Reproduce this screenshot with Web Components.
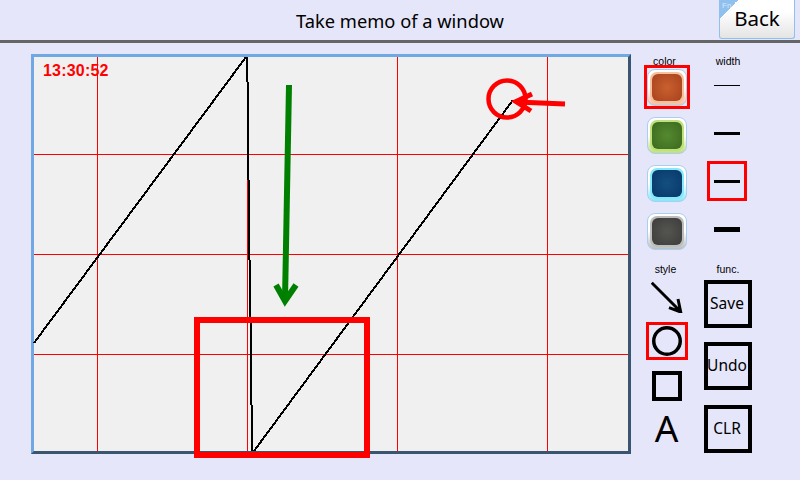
<!DOCTYPE html>
<html>
<head>
<meta charset="utf-8">
<title>Take memo of a window</title>
<style>
  html, body { margin: 0; padding: 0; }
  body {
    width: 800px;
    height: 480px;
    overflow: hidden;
    background: #e6e6fa;
    font-family: "Noto Sans", sans-serif;
  }
  .main { display: flex; align-items: flex-start; padding: 11px 0 0 31px; }
</style>
</head>
<body>
<memo-header title-text="Take memo of a window"></memo-header>
<div class="main">
  <memo-canvas time="13:30:52"></memo-canvas>
  <tool-panel>
    <tool-column slot="colors" label="color">
      <color-swatch color="orange" selected></color-swatch>
      <color-swatch color="green"></color-swatch>
      <color-swatch color="blue"></color-swatch>
      <color-swatch color="gray"></color-swatch>
    </tool-column>
    <tool-column slot="widths" label="width">
      <width-option size="1"></width-option>
      <width-option size="3"></width-option>
      <width-option size="3" selected></width-option>
      <width-option size="5"></width-option>
    </tool-column>
    <tool-column slot="styles" label="style">
      <style-option kind="arrow"></style-option>
      <style-option kind="circle" selected></style-option>
      <style-option kind="square"></style-option>
      <style-option kind="text"></style-option>
    </tool-column>
    <tool-column slot="funcs" label="func.">
      <func-button>Save</func-button>
      <func-button>Undo</func-button>
      <func-button>CLR</func-button>
    </tool-column>
  </tool-panel>
</div>

<script>
class MemoHeader extends HTMLElement {
  constructor() {
    super();
    const shadowRoot = this.attachShadow({mode: 'open'});
    shadowRoot.innerHTML = `
      <style>
        :host {
          display: flex;
          align-items: center;
          justify-content: center;
          position: relative;
          height: 40px;
          border-bottom: 3px solid #666;
          color: #000;
        }
        h1 {
          margin: 0;
          font: normal 18.3px "Noto Sans", sans-serif;
        }
        button {
          position: absolute;
          top: 0;
          right: 5px;
          width: 76px;
          height: 39px;
          padding: 0 0 2px 0;
          box-sizing: border-box;
          border: 1px solid #8fc0ee;
          border-top: 0;
          border-radius: 0 0 3px 3px;
          background: linear-gradient(#fff 30%, #e4e4e4);
          font: 20.5px "Noto Sans", sans-serif;
          color: #000;
          overflow: hidden;
        }
        .fn {
          position: absolute;
          left: 0;
          top: 0;
          width: 18px;
          height: 18px;
          background: linear-gradient(135deg, #8fc0ee 50%, transparent 50%);
        }
        .fn span {
          position: absolute;
          left: 2px;
          top: 1px;
          font: 8px "Liberation Sans", sans-serif;
          color: #d8e8fa;
        }
      </style>
      <h1>${this.getAttribute('title-text')}</h1>
      <button><div class="fn"><span>Fn</span></div>Back</button>
    `;
  }
}

class MemoCanvas extends HTMLElement {
  constructor() {
    super();
    const shadowRoot = this.attachShadow({mode: 'open'});
    shadowRoot.innerHTML = `
      <style>
        :host {
          display: block;
          position: relative;
          flex: none;
          width: 600px;
          height: 400px;
          box-sizing: border-box;
          background: #f0f0f0;
          border-style: solid;
          border-width: 3px;
          border-color: #70a8e4 #3a5570 #3a5570 #70a8e4;
        }
        svg {
          position: absolute;
          left: -3px;
          top: -3px;
          width: 600px;
          height: 400px;
          overflow: visible;
        }
        .time {
          position: absolute;
          left: 9px;
          top: 5px;
          font: bold 16px "Liberation Sans", sans-serif;
          letter-spacing: 0.2px;
          color: #f00;
        }
      </style>
      <svg viewBox="31 54 600 400" fill="none">
        <g stroke="#f00" stroke-width="1" shape-rendering="crispEdges">
          <path d="M34 154.5H628M34 254.5H628M34 354.5H628"/>
          <path d="M97.5 57V451M247.5 57V451M397.5 57V451M547.5 57V451"/>
        </g>
        <g stroke="#000" stroke-width="2" shape-rendering="crispEdges" stroke-linejoin="bevel">
          <path d="M34 343L246 57"/>
          <path d="M247 57V82M248 82V180M249 180V260M250 260V323M251 323V405M252 405V451"/>
          <path d="M254 451L513 100"/>
        </g>
        <g stroke="#008000" stroke-width="6">
          <path d="M289 85L285 300"/>
          <path d="M276 285L285 301L296 285"/>
        </g>
        <g stroke="#f00">
          <circle cx="507" cy="99" r="18.5" stroke-width="4.5"/>
          <path d="M565 104L517 102" stroke-width="5"/>
          <path d="M532 94L516 101.5L531 111" stroke-width="5"/>
          <rect x="197" y="320" width="170" height="135" stroke-width="6"/>
        </g>
      </svg>
      <div class="time">${this.getAttribute('time')}</div>
    `;
  }
}

class ToolPanel extends HTMLElement {
  constructor() {
    super();
    const shadowRoot = this.attachShadow({mode: 'open'});
    shadowRoot.innerHTML = `
      <style>
        :host {
          display: grid;
          flex: none;
          grid-template-columns: 46px 48px;
          column-gap: 14px;
          margin: -11px 0 0 13px;
          padding-top: 12px;
        }
      </style>
      <slot name="colors"></slot>
      <slot name="widths"></slot>
      <slot name="styles"></slot>
      <slot name="funcs"></slot>
    `;
  }
}

class ToolColumn extends HTMLElement {
  constructor() {
    super();
    const shadowRoot = this.attachShadow({mode: 'open'});
    shadowRoot.innerHTML = `
      <style>
        :host {
          display: flex;
          flex-direction: column;
          align-items: center;
        }
        :host([slot="styles"]), :host([slot="funcs"]) { padding-top: 6px; }
        :host([slot="funcs"]) { gap: 14.5px; }
        .label {
          height: 10px;
          font: 10.5px/12px "Liberation Sans", sans-serif;
          color: #000;
          white-space: nowrap;
        }
        :host([slot="colors"]) .label { padding-right: 5px; }
        :host([slot="styles"]) .label { padding-right: 3px; margin-bottom: -2px; }
        :host([slot="funcs"]) .label { margin-bottom: -8px; }
      </style>
      <div class="label">${this.getAttribute('label')}</div>
      <slot></slot>
    `;
  }
}

const swatches = {
  orange: ['#c8602f', '#a9421d', '#f7c09c'],
  green: ['#55892f', '#3a6a1e', '#bfe07a'],
  blue: ['#134f80', '#08386a', '#86e8f8'],
  gray: ['#555550', '#3c3c3c', '#bdbdbd'],
};

class ColorSwatch extends HTMLElement {
  constructor() {
    super();
    const [mid, edge, rim] = swatches[this.getAttribute('color')];
    const shadowRoot = this.attachShadow({mode: 'open'});
    shadowRoot.innerHTML = `
      <style>
        :host {
          display: flex;
          align-items: center;
          justify-content: center;
          width: 46px;
          height: 44px;
          margin-bottom: 4px;
          box-sizing: border-box;
        }
        :host([selected]) { border: 3px solid #f00; }
        .face {
          display: flex;
          align-items: center;
          justify-content: center;
          width: 40px;
          height: 37px;
          flex: none;
          box-sizing: border-box;
          border: 1px solid #a8cff2;
          border-radius: 8px;
          background: linear-gradient(#fff, #fff 50%, ${rim});
        }
        .well {
          width: 34px;
          height: 31px;
          box-sizing: border-box;
          padding: 2px;
          border-radius: 7px;
          background: ${rim};
        }
        .well div {
          width: 100%;
          height: 100%;
          border-radius: 6px;
          background: radial-gradient(circle, ${mid}, ${edge});
        }
      </style>
      <div class="face"><div class="well"><div></div></div></div>
    `;
  }
}

class WidthOption extends HTMLElement {
  constructor() {
    super();
    const size = Number(this.getAttribute('size'));
    const shadowRoot = this.attachShadow({mode: 'open'});
    shadowRoot.innerHTML = `
      <style>
        :host {
          display: flex;
          align-items: center;
          justify-content: center;
          width: 40px;
          height: 40px;
          margin: 0 2px 8px 0;
          box-sizing: border-box;
        }
        :host([selected]) { border: 3px solid #f00; }
        div { width: 26px; height: ${size}px; background: #000; }
      </style>
      <div></div>
    `;
  }
}

const styleIcons = {
  arrow: `<svg width="32" height="32" viewBox="0 0 32 32" fill="none" stroke="#000" stroke-width="3">
            <path d="M.7 1.7L29 30M18 26.7L29.7 31L27 18"/></svg>`,
  circle: `<svg width="32" height="32" viewBox="0 0 32 32" fill="none" stroke="#000" stroke-width="3.5">
            <circle cx="16" cy="16" r="13.25"/></svg>`,
  square: `<svg width="30" height="30" viewBox="0 0 30 30" fill="none" stroke="#000" stroke-width="4">
            <rect x="2" y="2" width="26" height="26"/></svg>`,
  text: `<span>A</span>`,
};

class StyleOption extends HTMLElement {
  constructor() {
    super();
    const shadowRoot = this.attachShadow({mode: 'open'});
    shadowRoot.innerHTML = `
      <style>
        :host {
          display: flex;
          align-items: center;
          justify-content: center;
          width: 42px;
          height: 38px;
          margin-top: 6.5px;
          box-sizing: border-box;
        }
        :host([selected]) { border: 3px solid #f00; }
        span { font: 37px/38px "Noto Sans", sans-serif; color: #000; margin: -4px 1px 0 0; }
        svg { display: block; flex: none; }
      </style>
      ${styleIcons[this.getAttribute('kind')]}
    `;
  }
}

class FuncButton extends HTMLElement {
  constructor() {
    super();
    const shadowRoot = this.attachShadow({mode: 'open'});
    shadowRoot.innerHTML = `
      <style>
        :host {
          display: flex;
          align-items: center;
          justify-content: center;
          width: 48px;
          height: 48px;
          box-sizing: border-box;
          border: 4px solid #000;
          padding: 0 2px 2px 0;
          font: 15.5px "Noto Sans", sans-serif;
          color: #000;
        }
      </style>
      <slot></slot>
    `;
  }
}

customElements.define('memo-header', MemoHeader);
customElements.define('memo-canvas', MemoCanvas);
customElements.define('tool-panel', ToolPanel);
customElements.define('tool-column', ToolColumn);
customElements.define('color-swatch', ColorSwatch);
customElements.define('width-option', WidthOption);
customElements.define('style-option', StyleOption);
customElements.define('func-button', FuncButton);
</script>
</body>
</html>
